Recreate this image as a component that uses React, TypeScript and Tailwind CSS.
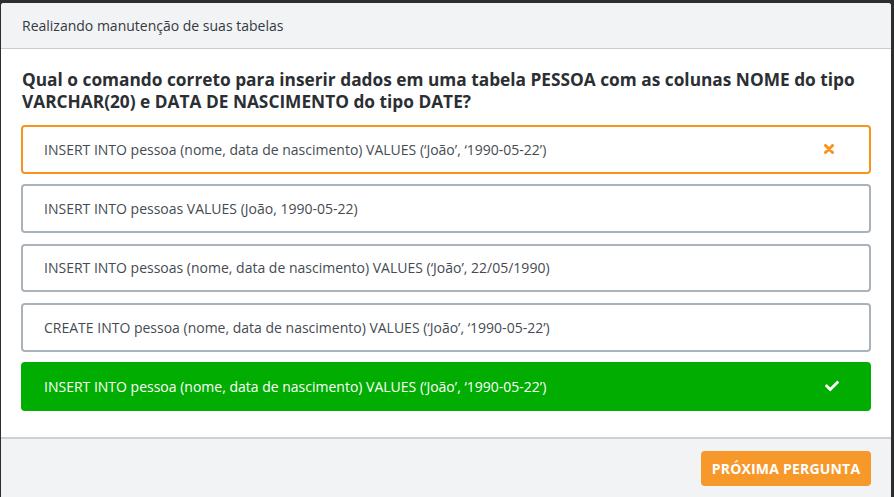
import React from "react";
import { FaCheck } from "react-icons/fa";

const options = [
  { text: "INSERT INTO pessoa (nome, data de nascimento) VALUES (‘João’, ‘1990-05-22’)", state: "wrong" },
  { text: "INSERT INTO pessoas VALUES (João, 1990-05-22)", state: "none" },
  { text: "INSERT INTO pessoas (nome, data de nascimento) VALUES (‘João’, 22/05/1990)", state: "none" },
  { text: "CREATE INTO pessoa (nome, data de nascimento) VALUES (‘João’, ‘1990-05-22’)", state: "none" },
  { text: "INSERT INTO pessoa (nome, data de nascimento) VALUES (‘João’, ‘1990-05-22’)", state: "right" },
];

export default function App() {
  return (
    <div className="w-[894px] h-[497px] overflow-hidden bg-[#2e2e2e] pl-[1px] pt-[3px] font-['Open_Sans',sans-serif]">
      <div className="w-[890px] h-[500px] bg-white rounded-t-[3px] flex flex-col">
        <div className="h-[46px] bg-[#f2f3f5] border-b border-[#c7cdd6] flex items-center pl-[21px] rounded-t-[3px]">
          <span className="text-[14px] text-[#343a40]">Realizando manutenção de suas tabelas</span>
        </div>
        <div className="px-5 pt-[20px] pb-[26px]">
          <h1 className="text-[17.3px] leading-[22px] font-bold text-[#2b2f33] pl-[1px]">
            Qual o comando correto para inserir dados em uma tabela PESSOA com as colunas NOME do tipo VARCHAR(20) e DATA DE NASCIMENTO do tipo DATE?
          </h1>
          <div className="mt-[12px] flex flex-col gap-[10.5px]">
            {options.map((o, i) => {
              const cls =
                o.state === "wrong"
                  ? "border-[#f7941d] bg-white text-[#454b52]"
                  : o.state === "right"
                  ? "border-[#00ad00] bg-[#00ad00] text-white"
                  : "border-[#aab2bb] bg-white text-[#454b52]";
              return (
                <div
                  key={i}
                  className={`h-[48.75px] border-2 rounded-[4px] flex items-center justify-between pl-[21px] pr-[34px] ${cls}`}
                >
                  <span className="text-[14px]">{o.text}</span>
                  {o.state === "wrong" && (
                    <svg width="10" height="10" viewBox="0 0 10 10" className="mr-[1px]">
                      <path d="M1.5 1.5 L8.5 8.5 M8.5 1.5 L1.5 8.5" stroke="#f7941d" strokeWidth="3" strokeLinecap="round" />
                    </svg>
                  )}
                  {o.state === "right" && <FaCheck className="text-white w-[14px] h-[14px] mr-[-4px]" />}
                </div>
              );
            })}
          </div>
        </div>
        <div className="border-t-2 border-[#cfd0d2] bg-[#f2f3f5] flex-1 flex justify-end px-5 pt-[12px]">
          <button className="w-[170px] h-[35px] bg-[#f7982b] rounded-[4px] text-white font-bold text-[14px] tracking-[0.2px]">
            PRÓXIMA PERGUNTA
          </button>
        </div>
      </div>
    </div>
  );
}
